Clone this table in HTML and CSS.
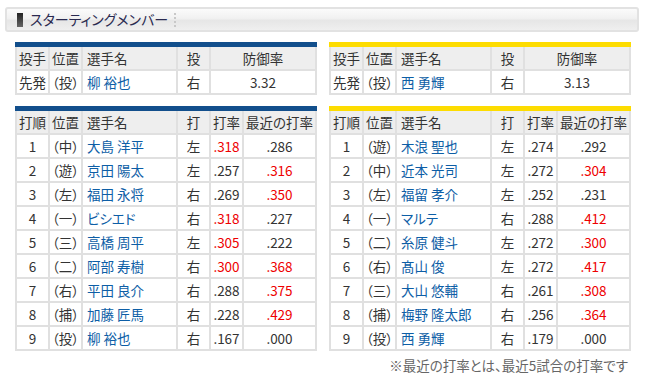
FILE: index.html
```html
<!DOCTYPE html>
<html lang="ja">
<head>
<meta charset="utf-8">
<title>スターティングメンバー</title>
<link rel="stylesheet" href="styles.css">
</head>
<body>
<div class="wrap">
  <div class="heading">
    <span class="heading-bar"></span>
    <span class="heading-text">スターティングメンバー</span>
    <span class="heading-sep"></span>
  </div>
  <div class="teams">
    <div class="team team-home">
      <table class="tbl pitcher">
        <colgroup><col class="c1"><col class="c2"><col class="c3"><col class="c4"><col class="c5p"></colgroup>
        <tr><th>投手</th><th>位置</th><th class="name">選手名</th><th>投</th><th>防御率</th></tr>
        <tr><td>先発</td><td>（投）</td><td class="name"><a>柳 裕也</a></td><td>右</td><td>3.32</td></tr>
      </table>
      <table class="tbl lineup">
        <colgroup><col class="c1"><col class="c2"><col class="c3"><col class="c4"><col class="c5"><col class="c6"></colgroup>
        <tr><th>打順</th><th>位置</th><th class="name">選手名</th><th>打</th><th>打率</th><th>最近の打率</th></tr>
        <tr><td>1</td><td>（中）</td><td class="name"><a>大島 洋平</a></td><td>左</td><td class="hi">.318</td><td>.286</td></tr>
        <tr><td>2</td><td>（遊）</td><td class="name"><a>京田 陽太</a></td><td>左</td><td>.257</td><td class="hi">.316</td></tr>
        <tr><td>3</td><td>（左）</td><td class="name"><a>福田 永将</a></td><td>右</td><td>.269</td><td class="hi">.350</td></tr>
        <tr><td>4</td><td>（一）</td><td class="name"><a>ビシエド</a></td><td>右</td><td class="hi">.318</td><td>.227</td></tr>
        <tr><td>5</td><td>（三）</td><td class="name"><a>高橋 周平</a></td><td>左</td><td class="hi">.305</td><td>.222</td></tr>
        <tr><td>6</td><td>（二）</td><td class="name"><a>阿部 寿樹</a></td><td>右</td><td class="hi">.300</td><td class="hi">.368</td></tr>
        <tr><td>7</td><td>（右）</td><td class="name"><a>平田 良介</a></td><td>右</td><td>.288</td><td class="hi">.375</td></tr>
        <tr><td>8</td><td>（捕）</td><td class="name"><a>加藤 匠馬</a></td><td>右</td><td>.228</td><td class="hi">.429</td></tr>
        <tr><td>9</td><td>（投）</td><td class="name"><a>柳 裕也</a></td><td>右</td><td>.167</td><td>.000</td></tr>
      </table>
    </div>
    <div class="team team-away">
      <table class="tbl pitcher">
        <colgroup><col class="c1"><col class="c2"><col class="c3"><col class="c4"><col class="c5p"></colgroup>
        <tr><th>投手</th><th>位置</th><th class="name">選手名</th><th>投</th><th>防御率</th></tr>
        <tr><td>先発</td><td>（投）</td><td class="name"><a>西 勇輝</a></td><td>右</td><td>3.13</td></tr>
      </table>
      <table class="tbl lineup">
        <colgroup><col class="c1"><col class="c2"><col class="c3"><col class="c4"><col class="c5"><col class="c6"></colgroup>
        <tr><th>打順</th><th>位置</th><th class="name">選手名</th><th>打</th><th>打率</th><th>最近の打率</th></tr>
        <tr><td>1</td><td>（遊）</td><td class="name"><a>木浪 聖也</a></td><td>左</td><td>.274</td><td>.292</td></tr>
        <tr><td>2</td><td>（中）</td><td class="name"><a>近本 光司</a></td><td>左</td><td>.272</td><td class="hi">.304</td></tr>
        <tr><td>3</td><td>（左）</td><td class="name"><a>福留 孝介</a></td><td>左</td><td>.252</td><td>.231</td></tr>
        <tr><td>4</td><td>（一）</td><td class="name"><a>マルテ</a></td><td>右</td><td>.288</td><td class="hi">.412</td></tr>
        <tr><td>5</td><td>（二）</td><td class="name"><a>糸原 健斗</a></td><td>左</td><td>.272</td><td class="hi">.300</td></tr>
        <tr><td>6</td><td>（右）</td><td class="name"><a>髙山 俊</a></td><td>左</td><td>.272</td><td class="hi">.417</td></tr>
        <tr><td>7</td><td>（三）</td><td class="name"><a>大山 悠輔</a></td><td>右</td><td>.261</td><td class="hi">.308</td></tr>
        <tr><td>8</td><td>（捕）</td><td class="name"><a>梅野 隆太郎</a></td><td>右</td><td>.256</td><td class="hi">.364</td></tr>
        <tr><td>9</td><td>（投）</td><td class="name"><a>西 勇輝</a></td><td>右</td><td>.179</td><td>.000</td></tr>
      </table>
      <p class="note">※最近の打率とは、最近5試合の打率です</p>
    </div>
  </div>
</div>
</body>
</html>
```
FILE: styles.css
```css
html, body {
  margin: 0;
  padding: 0;
  background: #fff;
}
body {
  font-family: "Noto Sans CJK JP", "Noto Sans", sans-serif;
  font-size: 13px;
  color: #333;
  font-feature-settings: "palt";
}
.wrap {
  padding: 7px 7px 0 5px;
}
.heading {
  height: 21px;
  border: 2px solid #e2e2e2;
  border-radius: 3px;
  background: linear-gradient(#fbfbfb 0%, #f1f1f1 45%, #e6e6e6 55%, #efefef 100%);
  display: flex;
  align-items: center;
  padding-left: 10px;
}
.heading-bar {
  width: 6px;
  height: 14px;
  background: linear-gradient(#222, #666);
}
.heading-text {
  margin-left: 7px;
  font-size: 14px;
  color: #2a2a50;
  line-height: 21px;
}
.heading-sep {
  margin-left: 6px;
  width: 0;
  height: 14px;
  border-left: 2px dotted #c8c8c8;
}
.teams {
  margin: 10px 0 0 10px;
  display: grid;
  grid-template-columns: 300px 300px;
  column-gap: 14px;
}
.tbl {
  width: 300px;
  table-layout: fixed;
  border-collapse: collapse;
  margin: 0;
}
.pitcher {
  margin-bottom: 11px;
}
.team-home .tbl { border-top: 5px solid #124f8c; }
.team-away .tbl { border-top: 5px solid #fddc00; }
.c1, .c2, .c4, .c5 { width: 33px; }
.c3 { width: 95px; }
.c5p { width: 106px; }
.c6 { width: 73px; }
.tbl th, .tbl td {
  border: 2px solid #e0e0e0;
  height: 22px;
  padding: 0;
  text-align: center;
  font-weight: normal;
  white-space: nowrap;
  overflow: hidden;
  line-height: 22px;
  font-size: 13.5px;
}
.tbl tr:first-child th { border-top: 0; }
.tbl th {
  background: #eeeeee;
  color: #333;
}
.tbl .name {
  text-align: left;
  padding-left: 4px;
}
.tbl .name a {
  color: #0d5ea6;
  text-decoration: none;
}
.tbl .hi {
  color: #ee0000;
}
.note {
  margin: 5px 0 0;
  text-align: right;
  padding-right: 1px;
  color: #666;
  font-size: 13.5px;
  line-height: 18px;
}
```
